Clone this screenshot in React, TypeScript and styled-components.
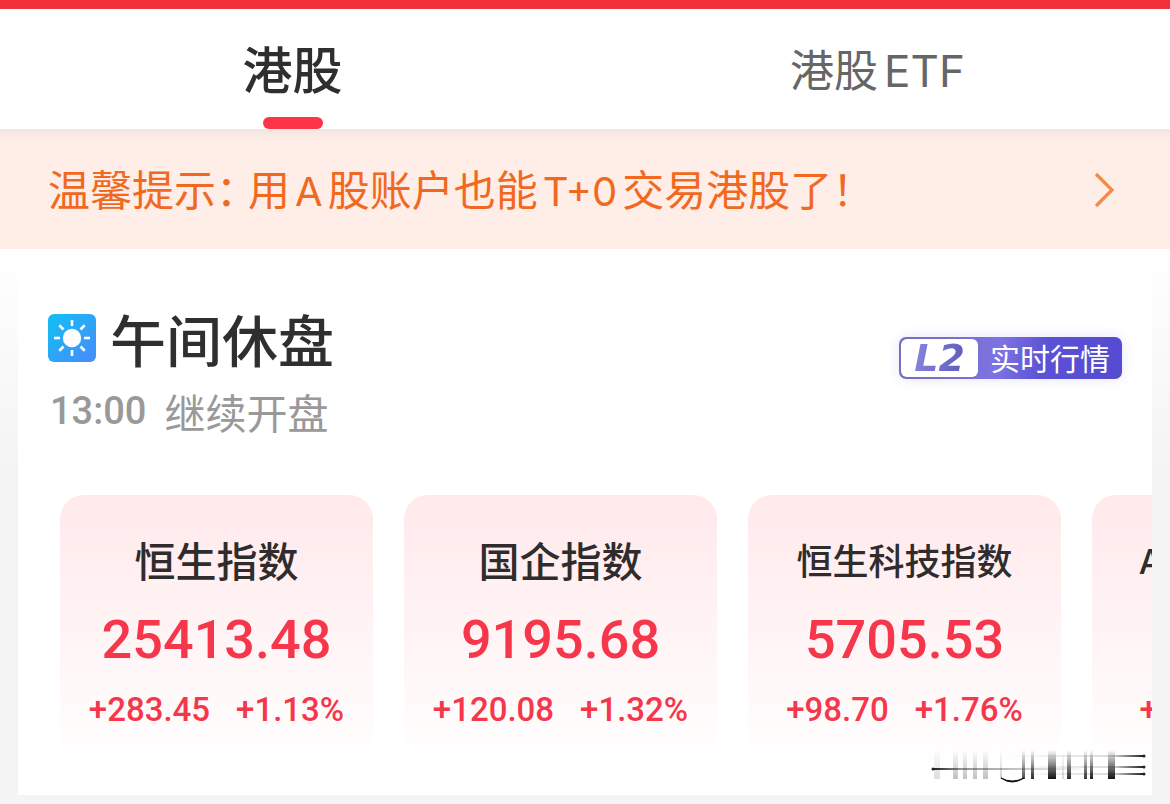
import React from "react";
import styled, { createGlobalStyle } from "styled-components";

const latin = `Inter, "Noto Sans CJK SC", sans-serif`;
const cjk = `"Noto Sans CJK SC", sans-serif`;
const numeric = `Roboto, "Noto Sans CJK SC", sans-serif`;

const GlobalStyle = createGlobalStyle`
  *, *::before, *::after { box-sizing: border-box; }
  body { margin: 0; background: #f4f4f4; color: #2f2f2f; font-family: ${cjk}; }
  h1, p, ul { margin: 0; padding: 0; }
  button { border: 0; padding: 0; background: none; cursor: pointer; }
`;

const Page = styled.div`
  display: flex;
  flex-direction: column;
  overflow: hidden;
`;

const TopStrip = styled.div`
  height: 9px;
  background: #f23037;
`;

const Tabs = styled.nav`
  display: grid;
  grid-template-columns: 1fr 1fr;
  height: 120px;
  background: #fff;
`;

const Tab = styled.button<{ $active?: boolean }>`
  position: relative;
  font-family: ${latin};
  font-size: ${(p) => (p.$active ? 50 : 44)}px;
  font-weight: ${(p) => (p.$active ? 500 : 400)};
  line-height: 60px;
  padding-top: 4px;
  color: ${(p) => (p.$active ? "#2f2f2f" : "#666")};

  &::after {
    content: "";
    display: ${(p) => (p.$active ? "block" : "none")};
    position: absolute;
    left: 50%;
    bottom: 0;
    width: 60px;
    height: 12px;
    margin-left: -30px;
    border-radius: 6px;
    background: #fc3349;
  }
`;

const TabSuffix = styled.span`
  padding-left: 6px;
`;

const Notice = styled.a`
  display: flex;
  align-items: center;
  justify-content: space-between;
  height: 120px;
  padding: 2px 56px 0 48px;
  background: linear-gradient(#f3e6df, #ffede7 12px);
  color: #f1691f;
  font-size: 42px;
  line-height: 60px;
  text-decoration: none;
  white-space: nowrap;
`;

const LatinRun = styled.span`
  font-family: ${latin};
  font-size: 40px;
  padding: 0 5px;
`;

const Punctuation = styled.span`
  font-feature-settings: "halt";
  padding-right: 11px;
`;

const Body = styled.main`
  padding: 0 18px 9px;
  background: linear-gradient(#fff, #f4f4f4 220px);
`;

const Panel = styled.section`
  position: relative;
  padding: 60px 0 26px;
  background: #fff;
`;

const PanelHead = styled.header`
  display: flex;
  align-items: flex-start;
  justify-content: space-between;
  padding: 0 30px;
`;

const TitleRow = styled.div`
  display: flex;
  align-items: center;
  gap: 14px;
`;

const Title = styled.h1`
  font-size: 56px;
  font-weight: 500;
  line-height: 58px;
`;

const Status = styled.p`
  display: flex;
  align-items: center;
  gap: 18px;
  padding-left: 2px;
  margin-top: 14px;
  font-size: 41px;
  line-height: 60px;
  color: #999;
`;

const Clock = styled.time`
  font-family: ${numeric};
  font-size: 38px;
  font-weight: 500;
`;

const LevelBadge = styled.button`
  display: flex;
  align-items: center;
  height: 42px;
  margin-top: 28px;
  padding: 2px;
  border-radius: 7px;
  background: linear-gradient(100deg, #7471c4 20%, #7d72e4 45%, #5a51d6 65%, #554bd0);
  box-shadow: 0 0 14px #e6e4fb;
`;

const LevelMark = styled.span`
  width: 77px;
  height: 38px;
  border-radius: 6px;
  background: #fff;
`;

const LevelText = styled.span`
  display: block;
  background: linear-gradient(100deg, #8f91e6, #5750b4);
  background-clip: text;
  -webkit-text-fill-color: transparent;
  font-family: "DejaVu Sans", sans-serif;
  font-size: 38px;
  font-weight: 700;
  font-style: italic;
  line-height: 38px;
  text-align: center;
`;

const LevelLabel = styled.span`
  padding: 0 10px 0 12px;
  color: #fff;
  font-family: ${cjk};
  font-size: 30px;
  line-height: 36px;
  height: 38px;
`;

const CardList = styled.ul`
  display: flex;
  gap: 31px;
  margin-top: 54px;
  padding-left: 42px;
  overflow-x: auto;
  scrollbar-width: none;
  list-style: none;
`;

const Card = styled.li`
  display: flex;
  flex: 0 0 313px;
  flex-direction: column;
  align-items: center;
  padding: 37px 0 39px;
  border-radius: 24px;
  background: linear-gradient(#ffe9eb, #fff);
  color: #f5364b;
  white-space: nowrap;
`;

const IndexName = styled.span<{ $size: number }>`
  font-family: ${latin};
  font-size: ${(p) => p.$size}px;
  font-weight: 500;
  line-height: 60px;
  color: #2f2c2d;
`;

const IndexValue = styled.strong`
  margin-top: 18px;
  font-family: ${numeric};
  font-size: 54px;
  font-weight: 500;
  line-height: 60px;
`;

const Changes = styled.span`
  display: flex;
  gap: 26px;
  margin-top: 20px;
  font-family: ${numeric};
  font-size: 33px;
  font-weight: 500;
  line-height: 40px;
`;

const Mark = styled.svg`
  position: absolute;
  right: 0;
  bottom: 5px;
`;

const indices = [
  { name: "恒生指数", size: 41, value: "25413.48", change: "+283.45", rate: "+1.13%" },
  { name: "国企指数", size: 41, value: "9195.68", change: "+120.08", rate: "+1.32%" },
  { name: "恒生科技指数", size: 36, value: "5705.53", change: "+98.70", rate: "+1.76%" },
  { name: "AH股溢价指数", size: 34, value: "118.90", change: "+1.61", rate: "+1.37%" },
];

function SunIcon() {
  const rays = [0, 45, 90, 135, 180, 225, 270, 315];
  return (
    <svg width="48" height="48" viewBox="0 0 48 48" aria-hidden="true">
      <defs>
        <linearGradient id="sky" x1="0" y1="0" x2="1" y2="1">
          <stop offset="0" stopColor="#12c0f4" />
          <stop offset="1" stopColor="#478bfb" />
        </linearGradient>
      </defs>
      <rect width="48" height="48" rx="6" fill="url(#sky)" />
      <circle cx="24" cy="24" r="9.2" fill="#fff" />
      {rays.map((a) => (
        <path key={a} d="M24 6v6" stroke="#fff" strokeWidth="2.6" transform={`rotate(${a} 24 24)`} />
      ))}
    </svg>
  );
}

const bars = [
  { x: 4, w: 6, o: 0.14 },
  { x: 23, w: 5, o: 0.26 },
  { x: 33, w: 4, o: 0.26 },
  { x: 43, w: 4, o: 0.26 },
  { x: 53, w: 5, o: 0.26 },
  { x: 70, w: 2, o: 0.2 },
  { x: 92, w: 3, o: 0.75 },
  { x: 101, w: 3, o: 0.9 },
  { x: 118, w: 8, o: 1 },
  { x: 132, w: 2, o: 0.15 },
  { x: 137, w: 4, o: 0.9 },
  { x: 154, w: 3, o: 0.85 },
  { x: 160, w: 3, o: 0.95 },
  { x: 178, w: 7, o: 1 },
];

function SmearMark() {
  return (
    <Mark width="222" height="44" viewBox="0 0 222 44" aria-hidden="true">
      <defs>
        <linearGradient id="fall" x1="0" y1="0" x2="0" y2="1">
          <stop offset="0" stopColor="#111" stopOpacity="0" />
          <stop offset="0.5" stopColor="#111" stopOpacity="0.5" />
          <stop offset="1" stopColor="#111" />
        </linearGradient>
        <linearGradient id="right" gradientUnits="userSpaceOnUse" x1="80" y1="0" x2="216" y2="0">
          <stop offset="0" stopColor="#111" stopOpacity="0" />
          <stop offset="0.75" stopColor="#111" stopOpacity="0.15" />
          <stop offset="1" stopColor="#111" />
        </linearGradient>
        <linearGradient id="left" gradientUnits="userSpaceOnUse" x1="0" y1="0" x2="150" y2="0">
          <stop offset="0" stopColor="#111" />
          <stop offset="0.2" stopColor="#111" stopOpacity="0.45" />
          <stop offset="1" stopColor="#111" stopOpacity="0.03" />
        </linearGradient>
      </defs>
      {bars.map((b) => (
        <rect key={b.x} x={b.x} y="4" width={b.w} height="29" fill="url(#fall)" opacity={b.o} />
      ))}
      <rect x="2" y="22" width="150" height="2" fill="url(#left)" />
      <rect x="80" y="9" width="135" height="2" fill="url(#right)" />
      <rect x="80" y="20" width="135" height="2" fill="url(#right)" />
      <rect x="80" y="27" width="135" height="2" fill="url(#right)" />
      <circle cx="3" cy="23" r="1.5" fill="#222" />
      <circle cx="214" cy="10" r="1.5" fill="#222" />
      <circle cx="214" cy="21" r="1.5" fill="#222" />
      <circle cx="214" cy="28" r="1.5" fill="#222" />
      <path d="M71 32Q82 38 94 32Q82 40 71 32Z" fill="#111" stroke="#111" strokeWidth="1" />
    </Mark>
  );
}

export default function App() {
  return (
    <Page>
      <GlobalStyle />
      <TopStrip />
      <Tabs>
        <Tab type="button" $active aria-current="page">港股</Tab>
        <Tab type="button">港股<TabSuffix>ETF</TabSuffix></Tab>
      </Tabs>
      <Notice href="#notice">
        <span>
          温馨提示<Punctuation>：</Punctuation>用<LatinRun>A</LatinRun>股账户也能
          <LatinRun>T+0</LatinRun>交易港股了<Punctuation>！</Punctuation>
        </span>
        <svg width="20" height="36" viewBox="0 0 20 36" fill="none" aria-hidden="true">
          <path d="M2 2L18 18L2 34" stroke="#f58a42" strokeWidth="3.2" />
        </svg>
      </Notice>
      <Body>
        <Panel>
          <PanelHead>
            <div>
              <TitleRow>
                <SunIcon />
                <Title>午间休盘</Title>
              </TitleRow>
              <Status>
                <Clock>13:00</Clock>
                <span>继续开盘</span>
              </Status>
            </div>
            <LevelBadge type="button">
              <LevelMark>
                <LevelText>L2</LevelText>
              </LevelMark>
              <LevelLabel>实时行情</LevelLabel>
            </LevelBadge>
          </PanelHead>
          <CardList>
            {indices.map((item) => (
              <Card key={item.name}>
                <IndexName $size={item.size}>{item.name}</IndexName>
                <IndexValue>{item.value}</IndexValue>
                <Changes>
                  <span>{item.change}</span>
                  <span>{item.rate}</span>
                </Changes>
              </Card>
            ))}
          </CardList>
          <SmearMark />
        </Panel>
      </Body>
    </Page>
  );
}
